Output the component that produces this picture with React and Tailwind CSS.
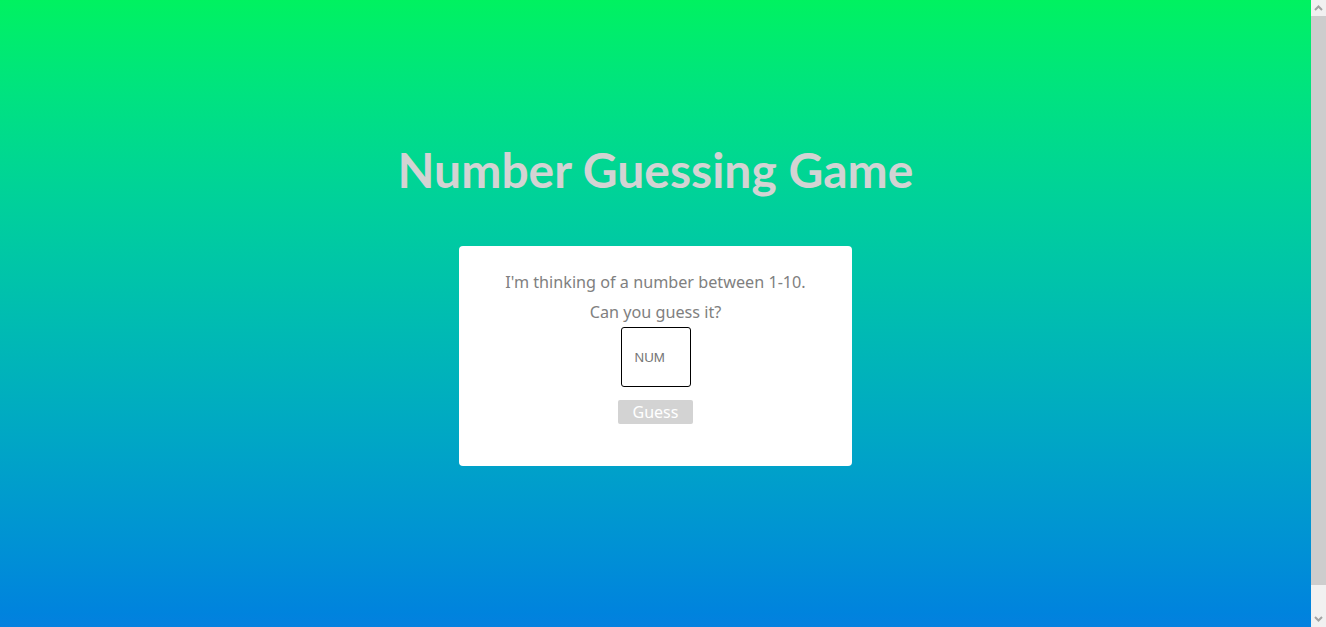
export default function App() {
  return (
    <div className="flex h-[627px] w-full overflow-hidden">
      <div className="flex-1 h-[627px] bg-gradient-to-b from-[#00f260] to-[#0580df] flex flex-col items-center" style={{ fontFamily: '"Noto Sans", sans-serif' }}>
        <h1 className="mt-[141px] text-[48px] leading-[58px] font-bold text-[#d3d3d3]" style={{ fontFamily: 'Lato, sans-serif' }}>Number Guessing Game</h1>
        <div className="mt-[47px] w-[393px] h-[220px] bg-white rounded-[4px] flex flex-col items-center pt-[21px] text-[#808080] text-[16.2px]">
          <p className="leading-[30px]">I'm thinking of a number between 1-10.</p>
          <p className="leading-[30px]">Can you guess it?</p>
          <input
            placeholder="NUM"
            className="w-[70px] h-[60px] border border-black rounded-[3px] pl-[13px] text-[13.33px] placeholder:text-[#757575] outline-none"
            style={{ fontFamily: '"Liberation Sans", Arial, sans-serif' }}
          />
          <button className="mt-[13px] w-[75px] h-[24px] bg-[#d3d3d3] text-white text-[16px] leading-[24px] rounded-[2px]">Guess</button>
        </div>
      </div>
      <div className="w-[15px] h-[627px] bg-[#f1f1f1] flex flex-col">
        <div className="h-[16px] flex items-center justify-center">
          <svg width="9" height="6" viewBox="0 0 9 6"><path d="M1 5 L4.5 1.5 L8 5" fill="none" stroke="#a3a3a3" strokeWidth="2" /></svg>
        </div>
        <div className="h-[569px] bg-[#cdcdcd]"></div>
        <div className="flex-1"></div>
        <div className="h-[16px] flex items-center justify-center">
          <svg width="9" height="6" viewBox="0 0 9 6"><path d="M1 1 L4.5 4.5 L8 1" fill="none" stroke="#a3a3a3" strokeWidth="2" /></svg>
        </div>
      </div>
    </div>
  );
}
